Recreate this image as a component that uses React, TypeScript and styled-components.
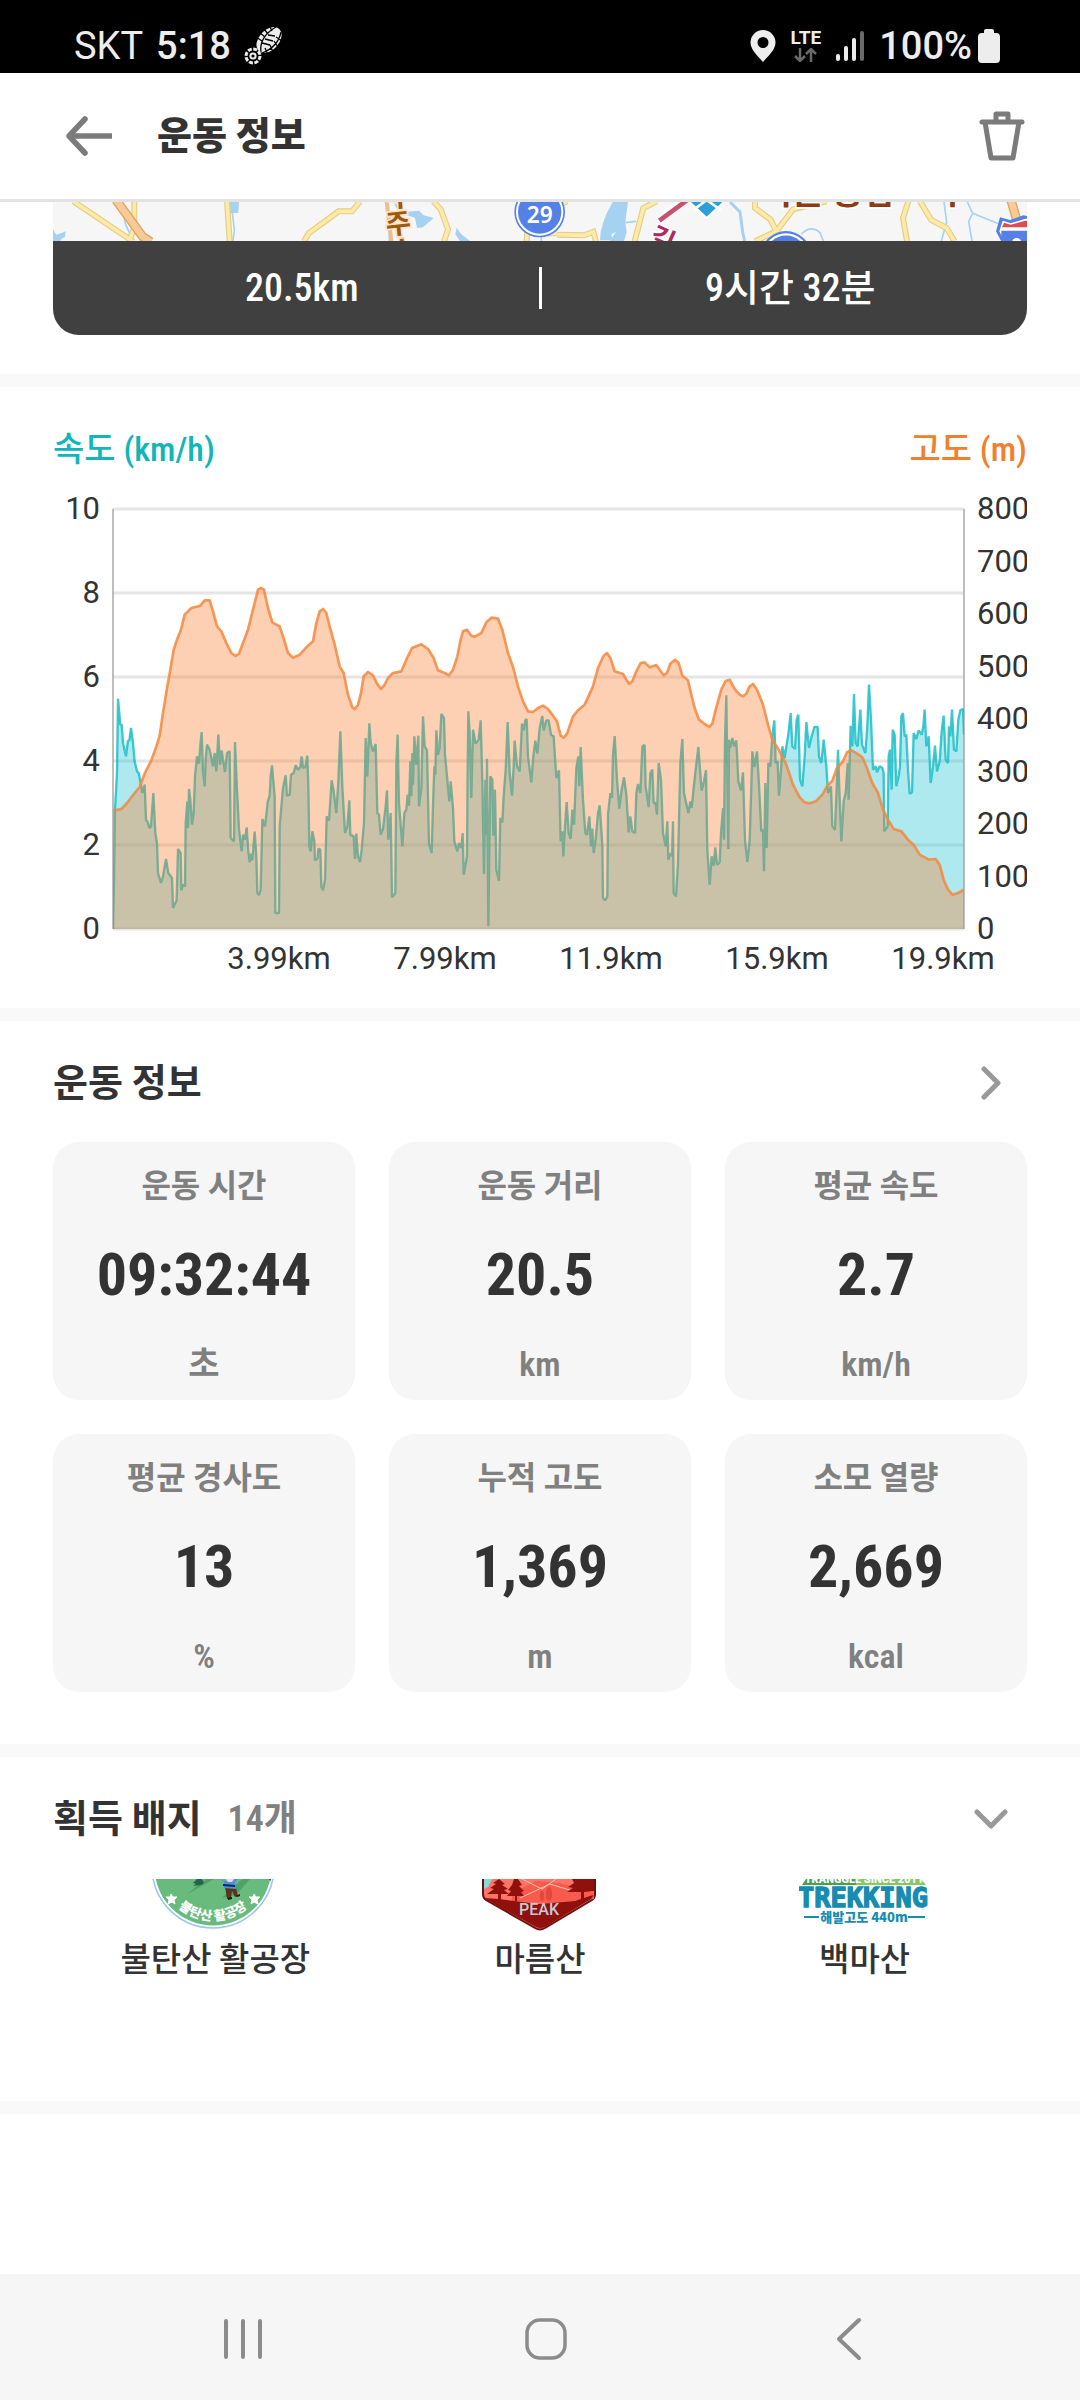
import React from "react";
import styled, { createGlobalStyle } from "styled-components";

const GlobalStyle = createGlobalStyle`
  *, *::before, *::after { box-sizing: border-box; }
  body {
    margin: 0;
    background: #ffffff;
    color: #333333;
    font-family: "Roboto Condensed", "Liberation Sans", "Noto Sans CJK KR", sans-serif;
  }
  h1, h2, p, dl, dt, dd, ul { margin: 0; padding: 0; }
  ul { list-style: none; }
  button {
    display: flex;
    align-items: center;
    justify-content: center;
    border: 0;
    padding: 0;
    background: none;
    cursor: pointer;
  }
  svg { display: block; }
`;

const Screen = styled.div`
  display: flex;
  flex-direction: column;
  min-height: 100vh;
`;

const StatusBar = styled.div`
  display: flex;
  align-items: center;
  justify-content: space-between;
  height: 73px;
  padding: 18px 80px 0 74px;
  background: #000000;
  color: #ededed;
  font-family: Roboto, sans-serif;
  font-size: 38px;
  line-height: 48px;
`;

const StatusGroup = styled.div<{ $gap: number }>`
  display: flex;
  align-items: center;
  gap: ${(p) => p.$gap}px;
`;

const StatusText = styled.span<{ $strong?: boolean }>`
  font-weight: ${(p) => (p.$strong ? 500 : 400)};
`;

const Network = styled.span`
  display: flex;
  flex-direction: column;
  align-items: center;
  gap: 2px;
  font-size: 19px;
  font-weight: 700;
  line-height: 16px;
`;

const Header = styled.header`
  display: flex;
  align-items: center;
  height: 129px;
  padding: 0 42px 0 53px;
  border-bottom: 3px solid #e2e2e2;
`;

const IconButton = styled.button`
  width: 72px;
  height: 72px;
  flex: none;
`;

const HeaderTitle = styled.h1`
  flex: 1;
  padding-left: 32px;
  font-size: 38px;
  font-weight: 900;
  line-height: 60px;
`;

const MapCard = styled.section`
  margin: 0 53px 39px;
  overflow: hidden;
  border-radius: 0 0 26px 26px;
`;

const MapStrip = styled.svg`
  width: 100%;
  height: 39px;
  background: #f6f6f6;
`;

const Summary = styled.div`
  display: grid;
  grid-template-columns: 1fr 3px 1fr;
  align-items: center;
  height: 94px;
  background: #404040;
  color: #ffffff;
  font-size: 38px;
  font-weight: 500;
  line-height: 60px;
  text-align: center;
`;

const SummaryValue = styled.span`
  padding-left: 12px;
`;

const SummaryRule = styled.span`
  height: 42px;
  background: #ffffff;
`;

const Separator = styled.hr`
  width: 100%;
  height: 13px;
  margin: 0;
  border: 0;
  background: #f9f9f9;
`;

const Section = styled.section<{ $bottom: number }>`
  padding: 32px 53px ${(p) => p.$bottom}px;
`;

const Legend = styled.div`
  display: flex;
  justify-content: space-between;
  height: 56px;
  font-size: 34px;
  font-weight: 500;
  line-height: 60px;
`;

const LegendItem = styled.span<{ $color: string }>`
  color: ${(p) => p.$color};
`;

const Chart = styled.svg`
  width: 100%;
  height: auto;
  font-family: Roboto, sans-serif;
  font-size: 31px;
`;

const SectionHead = styled.div`
  display: flex;
  align-items: center;
  height: 60px;
`;

const SectionTitle = styled.h2`
  font-size: 38px;
  font-weight: 700;
  line-height: 60px;
`;

const Count = styled.span`
  padding-left: 26px;
  color: #808080;
  font-size: 36px;
  font-weight: 600;
  line-height: 60px;
`;

const HeadButton = styled(IconButton)`
  margin-left: auto;
`;

const Stats = styled.dl`
  display: grid;
  grid-template-columns: repeat(3, 1fr);
  gap: 34px;
  padding-top: 29px;
`;

const Stat = styled.div`
  display: flex;
  flex-direction: column;
  align-items: center;
  justify-content: space-between;
  height: 258px;
  padding: 22px 8px 14px;
  border-radius: 26px;
  background: #f6f6f6;
`;

const StatLabel = styled.dt`
  color: #808080;
  font-size: 32px;
  font-weight: 700;
  line-height: 44px;
`;

const StatValue = styled.dd`
  font-size: 60px;
  font-weight: 700;
  line-height: 72px;
`;

const StatUnit = styled.dd`
  color: #808080;
  font-size: 34px;
  font-weight: 600;
  line-height: 44px;
`;

const Badges = styled.ul`
  display: grid;
  grid-template-columns: repeat(3, 1fr);
  height: 170px;
  margin-top: 30px;
  overflow: hidden;
`;

const Badge = styled.li`
  display: flex;
  flex-direction: column;
  align-items: center;
  gap: 5px;
  font-size: 33px;
  font-weight: 500;
  line-height: 48px;
`;

const NavBar = styled.nav`
  display: flex;
  align-items: center;
  justify-content: space-around;
  height: 126px;
  margin-top: auto;
  padding: 4px 80px 0 92px;
  background: #f6f6f6;
`;

/* Samples are [x, y] on a grid of three units per chart pixel. */
const elevation =
  "0,993 25,988 42,970 65,940 80,922 95,882 115,842 130,800 140,768 150,700 163,620 173,565 182,510 192,480 204,450 215,405 235,385 262,378 275,362 290,362 300,395 312,440 325,455 340,490 355,520 368,529 378,522 390,490 405,450 420,390 435,330 444,325 453,330 465,385 478,428 500,440 510,470 525,520 540,534 560,525 580,503 600,485 610,430 620,395 630,388 640,400 650,440 665,495 680,560 692,580 705,645 718,683 726,688 735,675 744,640 752,590 765,577 780,587 792,612 804,628 815,615 825,595 840,580 865,575 880,540 897,505 925,494 945,508 962,535 975,572 995,580 1008,587 1020,570 1033,530 1043,480 1050,455 1062,450 1075,468 1085,471 1105,460 1120,428 1135,414 1155,417 1168,450 1185,520 1200,562 1215,620 1230,665 1245,695 1260,697 1275,685 1290,678 1305,688 1320,708 1332,725 1343,768 1352,774 1362,762 1380,710 1395,692 1415,675 1440,620 1455,565 1472,528 1482,520 1492,535 1505,575 1530,583 1540,600 1548,612 1558,605 1570,575 1583,550 1595,548 1610,563 1630,556 1640,570 1652,587 1662,580 1672,552 1686,540 1697,550 1708,588 1725,602 1735,645 1745,685 1758,720 1775,733 1788,741 1798,732 1808,690 1825,630 1838,604 1850,600 1865,628 1880,645 1890,650 1900,642 1910,620 1920,613 1932,630 1950,675 1965,735 1978,780 2000,815 2020,855 2040,915 2060,953 2075,968 2090,971 2108,965 2128,945 2142,920 2158,903 2172,865 2190,845 2202,818 2216,812 2232,822 2248,833 2260,860 2278,910 2295,940 2310,990 2325,1020 2342,1048 2365,1055 2385,1080 2402,1095 2420,1125 2448,1140 2468,1138 2480,1155 2492,1200 2505,1230 2518,1245 2535,1240 2553,1230";

const speed =
  "0,1348 3,1200 6,990 12,880 15,657 22,735 26,735 30,790 39,830 45,783 49,783 54,745 60,790 65,845 72,875 77,880 82,905 88,940 95,915 99,1020 103,1025 110,1045 114,1040 121,940 127,1060 132,1090 135,1180 144,1210 150,1190 159,1138 166,1180 177,1195 180,1285 191,1262 195,1108 203,1120 205,1232 210,1215 216,1220 218,1030 223,965 225,1045 228,928 232,960 237,1035 242,1000 246,890 252,830 258,852 262,795 266,757 270,875 275,920 278,840 282,795 290,810 294,830 300,860 305,820 310,875 316,765 321,855 326,812 330,840 336,877 342,820 350,815 353,1075 363,1085 366,787 372,930 378,1050 386,1115 390,1065 396,1080 401,1043 406,1115 410,1147 414,1122 418,1142 425,1056 430,1130 433,1240 438,1246 443,1230 448,1018 456,1040 464,968 470,948 473,890 477,857 485,950 487,1300 498,1300 500,1040 510,925 518,887 522,948 530,945 534,885 542,880 548,857 555,870 562,862 566,830 570,865 577,862 583,828 586,920 589,1100 593,1115 598,1055 604,1085 606,1142 614,1135 616,1107 622,1110 625,1220 630,1232 636,1200 641,1010 648,1022 656,902 662,935 670,1000 676,905 682,755 688,920 696,1060 703,1040 709,962 712,1065 722,1070 726,1138 730,1062 735,1130 741,1147 746,1110 753,1030 758,775 763,890 769,731 773,790 780,815 788,793 793,1000 798,1005 803,1065 810,1048 818,980 822,932 826,1080 833,1000 837,1253 847,1240 850,850 854,765 858,970 868,1100 874,1000 880,990 884,945 888,978 892,845 895,950 898,820 900,915 904,770 910,855 916,768 918,980 925,925 930,710 935,800 942,812 948,1090 956,1120 960,980 964,860 967,885 970,752 975,825 980,805 985,703 993,715 996,825 1003,900 1009,965 1013,905 1020,985 1024,1085 1033,1115 1038,1090 1045,1105 1049,1060 1052,1185 1062,1130 1064,860 1066,695 1070,760 1075,955 1080,750 1088,792 1097,780 1103,722 1108,900 1113,1183 1117,900 1120,1065 1122,837 1126,1340 1132,890 1138,900 1141,1068 1146,930 1150,1170 1158,1203 1162,1015 1168,1028 1172,950 1178,870 1184,727 1190,880 1197,948 1202,860 1205,783 1212,860 1220,875 1227,732 1232,752 1237,722 1241,718 1245,830 1255,908 1261,830 1267,783 1273,822 1280,745 1288,709 1292,752 1300,722 1307,722 1314,765 1322,770 1330,895 1338,872 1343,1085 1348,1055 1351,1130 1356,1040 1361,967 1367,1060 1373,1078 1378,990 1383,1035 1390,865 1396,830 1399,920 1403,802 1410,960 1417,1060 1422,1065 1429,1010 1434,1100 1438,1047 1442,1120 1448,1080 1455,1000 1460,977 1468,1095 1470,1255 1477,1262 1483,1250 1485,1005 1492,940 1497,955 1500,825 1505,769 1512,900 1519,987 1526,930 1533,893 1540,945 1547,1058 1552,1010 1558,1055 1566,1060 1570,940 1575,913 1582,940 1588,800 1595,796 1598,920 1607,982 1612,880 1618,870 1622,970 1628,970 1632,1005 1637,850 1644,900 1650,1060 1658,1100 1663,1025 1666,1140 1672,1120 1677,1130 1680,1025 1682,1240 1689,1250 1695,1150 1702,850 1708,778 1713,940 1726,1000 1732,965 1736,985 1742,925 1748,870 1756,802 1761,870 1766,933 1773,905 1779,872 1783,1110 1790,1215 1796,1130 1802,1158 1807,1103 1812,1155 1820,1148 1824,1060 1830,985 1833,1080 1836,780 1840,647 1846,1108 1848,780 1852,805 1858,775 1864,800 1870,782 1876,905 1884,932 1890,878 1896,1080 1903,1147 1910,1080 1915,920 1918,815 1924,862 1932,815 1938,915 1945,1055 1950,1050 1953,1175 1957,910 1961,1105 1966,850 1972,860 1978,770 1984,722 1988,850 1994,845 1998,948 2004,870 2008,800 2015,835 2020,800 2026,765 2033,700 2038,800 2046,808 2051,720 2056,705 2061,900 2068,920 2075,830 2080,727 2088,805 2096,770 2104,742 2114,742 2118,830 2125,850 2132,780 2140,860 2145,940 2154,920 2158,1040 2166,1050 2172,900 2175,810 2179,930 2185,1085 2192,965 2198,940 2204,850 2207,960 2213,738 2218,800 2223,643 2228,790 2234,800 2242,690 2247,795 2257,820 2263,740 2268,615 2274,720 2280,870 2288,860 2292,878 2300,860 2308,865 2312,880 2314,1055 2324,1040 2327,830 2331,810 2336,930 2339,750 2345,765 2350,920 2357,890 2361,860 2365,710 2370,700 2375,770 2380,765 2385,870 2390,942 2397,938 2402,760 2410,778 2417,752 2426,765 2431,740 2435,690 2440,800 2447,770 2453,910 2460,860 2466,798 2472,875 2480,845 2486,755 2492,708 2498,840 2505,850 2508,740 2512,770 2517,690 2523,810 2530,815 2536,720 2542,692 2550,688 2553,765";

const speedTicks = [10, 8, 6, 4, 2, 0];
const elevationTicks = [800, 700, 600, 500, 400, 300, 200, 100, 0];
const distanceTicks = ["3.99km", "7.99km", "11.9km", "15.9km", "19.9km"];

const PLOT = { left: 60, right: 911, top: 34, bottom: 454 };
const plotHeight = PLOT.bottom - PLOT.top;

function WorkoutChart() {
  return (
    <Chart viewBox="0 0 974 520" role="img" aria-label="속도 및 고도 그래프">
      <g stroke="#e5e5e5" strokeWidth="3">
        {speedTicks.map((t) => {
          const y = PLOT.bottom - (t / 10) * plotHeight;
          return <line key={t} x1={PLOT.left} x2={PLOT.right} y1={y} y2={y} />;
        })}
      </g>
      <g stroke="#a9a9a9" strokeWidth="1.5">
        <line x1={PLOT.left} x2={PLOT.left} y1={PLOT.top} y2={PLOT.bottom} />
        <line x1={PLOT.right} x2={PLOT.right} y1={PLOT.top} y2={PLOT.bottom} />
      </g>
      <svg
        x={PLOT.left}
        y={PLOT.top}
        width={PLOT.right - PLOT.left}
        height={plotHeight}
        viewBox="0 88 2553 1260"
        preserveAspectRatio="none"
      >
        <polygon points={`0,1348 ${speed} 2553,1348`} fill="#18c0d1" fillOpacity="0.35" />
        <polyline points={speed} fill="none" stroke="#10bcc6" strokeOpacity="0.8" strokeWidth="7" strokeLinejoin="bevel" />
        <polygon points={`0,1348 ${elevation} 2553,1348`} fill="#fc7926" fillOpacity="0.35" />
        <polyline points={elevation} fill="none" stroke="#f4873d" strokeOpacity="0.85" strokeWidth="8" strokeLinejoin="round" />
      </svg>
      <g fill="#333333">
        {speedTicks.map((t) => (
          <text key={t} x={PLOT.left - 13} y={PLOT.bottom - (t / 10) * plotHeight + 10} textAnchor="end">
            {t}
          </text>
        ))}
        {elevationTicks.map((t) => (
          <text key={t} x={PLOT.right + 13} y={PLOT.bottom - (t / 800) * plotHeight + 10}>
            {t}
          </text>
        ))}
        {distanceTicks.map((t, i) => (
          <text key={t} x={226 + i * 166} y={494} textAnchor="middle">
            {t}
          </text>
        ))}
      </g>
    </Chart>
  );
}

function Road({ d, wide }: { d: string; wide?: boolean }) {
  return (
    <g fill="none">
      <path d={d} stroke={wide ? "#e0a263" : "#e5cd85"} strokeWidth={wide ? 28 : 18} />
      <path d={d} stroke={wide ? "#f8cb94" : "#fdeaa9"} strokeWidth={wide ? 20 : 11} />
    </g>
  );
}

function MapView() {
  return (
    <MapStrip viewBox="39 36 2922 117" preserveAspectRatio="xMidYMid slice" role="img" aria-label="운동 경로 지도">
      <g fill="#a5d2f1">
        <path d="M39 118l10 16 14-4 14-6-2 16-10 6-6 10H39z" />
        <path d="M568 36h29l-2 33h-25z" />
        <path d="M1062 36l30 30 45-4 14 14 30 8-32 28-18 2-6-30-40-14-18-20z" />
        <path d="M1250 113l14 20 26 20h-30l-14-20z" />
        <path d="M1718 36h46l-8 60 4 30-8 27h-42l18-28-14 8 4 18h-38q0-50 38-115z" />
      </g>
      <g fill="none" stroke="#a5d2f1" strokeWidth="5">
        <path d="M253 86l4 18 14 30M577 69l6 50-4 34M1048 110v43M1504 130v23M1756 98l32-4" />
        <path d="M2070 36l30 30 8 60 6 27" strokeWidth="9" />
        <path d="M2284 132q30-28 56-4l10 25M2712 36l8 60-16 57M2782 36l16 34-12 24 10 59M2798 70l50 20 50 20" />
      </g>
      <Road d="M100 34L280 155M283 34v80l-16 39M561 34l8 119M960 34l-24 30h-40l-90 66-14 24M1180 34l22 24 22 60-12 36M1462 120l-2 34M1520 130h30" />
      <Road d="M228 30l80 110 24 16" wide />
      <Road d="M1552 134l80 2 28-10 8 28M1850 34l-40 20-26 100M1560 46l20-12M2145 34v20l46 34 18 36-64 30M2209 124l50-66 100-24M2605 34l-16 50 12 70M2640 34l34 56 46 24 24 40" />
      <Road d="M2910 20l26 90" wide />
      <path d="M1854 92l88-66" stroke="#ffffff" strokeWidth="26" />
      <path d="M1858 92l84-62" stroke="#c95170" strokeWidth="14" />
      <path d="M1940 28h120l-60 56z" fill="#2c9fd9" stroke="#ffffff" strokeWidth="6" />
      <path d="M1960 60l40-30 42 30" stroke="#ffffff" strokeWidth="8" fill="none" />
      <path d="M1040 34l14 120" stroke="#f3bb8a" strokeWidth="12" />
      <g stroke="#ffffff" strokeWidth="10" paintOrder="stroke" fontWeight="700">
        <g fill="#9b5a10" stroke="#fbe3c8" fontSize="82">
          <text x="1044" y="52" transform="rotate(-4 1044 52)">수</text>
          <text x="1040" y="134" transform="rotate(-6 1040 134)">주</text>
          <text x="1052" y="216" transform="rotate(-4 1052 216)">속</text>
        </g>
        <text x="1822" y="160" fill="#b02a5b" fontSize="80" transform="rotate(24 1822 160)">길</text>
        <text x="2160" y="42" fill="#8f3a10" fontSize="104">서울 종합</text>
        <text x="2660" y="42" fill="#8f3a10" fontSize="104">시</text>
      </g>
      <g>
        <circle cx="1499" cy="66" r="76" fill="#5580e5" />
        <circle cx="1499" cy="66" r="68" fill="none" stroke="#ffffff" strokeWidth="6" />
        <text x="1499" y="98" fill="#ffffff" fontFamily="Noto Sans" fontSize="68" fontWeight="600" textAnchor="middle">29</text>
        <circle cx="2238" cy="199" r="76" fill="#5580e5" />
        <circle cx="2238" cy="199" r="66" fill="none" stroke="#ffffff" strokeWidth="7" />
      </g>
      <path d="M2880 82l30 8 40-14 30 6v80h-92l-20-38z" fill="#5580e5" />
      <path d="M2888 92l24 8 44-14 24 4v70h-84l-18-36z" fill="#ffffff" />
      <path d="M2892 98l20 6 44-12h20v20h-90z" fill="#e34b50" />
      <path d="M2884 122h90v40h-80l-10-24z" fill="#5580e5" />
      <ellipse cx="2930" cy="158" rx="14" ry="14" fill="#ffffff" />
    </MapStrip>
  );
}

function ParaglidingBadge() {
  return (
    <svg width="130" height="52" viewBox="150 1879 130 52" role="img" aria-label="불탄산 활공장 배지">
      <circle cx="213" cy="1867" r="61" fill="#ffffff" stroke="#9cc5f0" strokeWidth="1.5" />
      <circle cx="213" cy="1867" r="58.5" fill="#68bb7d" />
      <path d="M186 1895l20-16h8zM222 1898l20-19h8l-14 16z" fill="#4fa267" />
      <path d="M197 1879l-4 4 3 1-3 2 8-1 3-2-2-4zM268 1879l3 2v-2z" fill="#23644f" />
      <path d="M225 1887l11 1 2 8-3 1-3-6-1 7-4 1z" fill="#5b3419" />
      <path d="M228 1898l4-1v2l-4 1zM236 1896l4-2v2l-3 1z" fill="#111a28" />
      <path d="M220 1879l4 3v6l12 1-1-7 3-3-3-1-4 3h-6z" fill="#4a8fea" />
      <path d="M226 1879h8l-2 3h-4z" fill="#f7d9cd" />
      <path d="M223 1884l12 1v2l-12-1z" fill="#13274b" />
      <g fill="#ffffff" stroke="#ffffff" strokeWidth="1" strokeLinejoin="round">
        <path d="M171 1894l2 3 4 0-3 3 1 4-3-2-4 2 1-4-3-3h4z" />
        <path d="M254 1894l2 3 4 0-3 3 1 4-4-2-3 2 1-4-3-3h4z" />
      </g>
      <path id="glider-text" d="M166 1892A53 53 0 0 0 260 1892" fill="none" />
      <text fill="#ffffff" fontSize="13" fontWeight="900" textAnchor="middle">
        <textPath href="#glider-text" startOffset="50%">불탄산 활공장</textPath>
      </text>
    </svg>
  );
}

function PeakBadge() {
  return (
    <svg width="118" height="52" viewBox="481 1879 118 52" role="img" aria-label="마름산 배지">
      <path d="M483 1870h112v24q0 4-3 6l-47 28q-5 3-10 0l-49-28q-3-2-3-6z" fill="#ff7565" stroke="#6b0f10" strokeWidth="2" />
      <path d="M484 1879h8l-4 8-4 2z" fill="#85dbd8" />
      <path d="M512 1893l24-12 24 2 34 10v6l-46 4-36-2z" fill="#f65b4d" />
      <path d="M522 1879l20 10 14-10M520 1898l30-14 26 8" stroke="#ffc4b4" strokeWidth="1" fill="none" />
      <path d="M485 1898l14 1 40 5 36-3 18-6v0q0 2-2 4l-46 28q-5 2-9 0l-49-27z" fill="#8f100c" />
      <g fill="#8f100c">
        <path d="M499 1879l6 5-3 1 6 4-4 1 5 4h-8v6h-3v-6h-11l7-5-4-1 6-4-3-1z" />
        <path d="M514 1879h4l4 6-3 1 5 5-3 1 3 4h-7v5h-2v-5h-8l4-5-3-1 4-5z" />
        <path d="M572 1879h22v12l-10 1v8h-3v-8h-14l6-4-5-1 6-4z" />
      </g>
      <g fill="#e2463c">
        <ellipse cx="549" cy="1894" rx="3" ry="7" />
        <ellipse cx="542" cy="1896" rx="2" ry="5" />
      </g>
      <text x="539" y="1915" fill="#c3cbd6" fontFamily="Roboto" fontSize="16" textAnchor="middle">PEAK</text>
    </svg>
  );
}

function TrekkingBadge() {
  return (
    <svg width="132" height="52" viewBox="799 1879 132 52" role="img" aria-label="백마산 배지">
      <path d="M806 1879h50v6h-54z" fill="#4b9f52" />
      <path d="M856 1879h65l5 6h-70z" fill="#86c766" />
      <g fontWeight="700" textAnchor="middle">
        <text x="864" y="1883" fill="#ffffff" fontFamily="Roboto" fontSize="11" fontWeight="900">TRANGGLE SINCE 2011</text>
        <text x="863" y="1907" fill="#168db0" stroke="#168db0" strokeWidth="1.4" fontFamily="DejaVu Sans Mono" fontSize="27">TREKKING</text>
        <text x="864" y="1922" fill="#168db0" fontFamily="Noto Sans CJK KR" fontSize="13" fontWeight="900">해발고도 440m</text>
      </g>
      <path d="M804 1917h15M908 1917h17" stroke="#168db0" strokeWidth="2" />
    </svg>
  );
}

const stats = [
  { label: "운동 시간", value: "09:32:44", unit: "초" },
  { label: "운동 거리", value: "20.5", unit: "km" },
  { label: "평균 속도", value: "2.7", unit: "km/h" },
  { label: "평균 경사도", value: "13", unit: "%" },
  { label: "누적 고도", value: "1,369", unit: "m" },
  { label: "소모 열량", value: "2,669", unit: "kcal" },
];

const badges = [
  { name: "불탄산 활공장", art: <ParaglidingBadge /> },
  { name: "마름산", art: <PeakBadge /> },
  { name: "백마산", art: <TrekkingBadge /> },
];

export default function App() {
  return (
    <>
      <GlobalStyle />
      <Screen>
        <StatusBar>
          <StatusGroup $gap={13}>
            <StatusText>SKT</StatusText>
            <StatusText $strong>5:18</StatusText>
            <svg width="40" height="38" viewBox="0 0 40 38">
              <ellipse cx="25" cy="13" rx="15" ry="10" fill="#ededed" transform="rotate(-47 25 13)" />
              <g stroke="#000000" strokeWidth="1.3" fill="none">
                <path d="M17 25Q15 10 32 0M18 26Q34 20 37 5M12 10l6 4M15 5l6 5M20 2l4 5M26 0l2 4M24 28l-3-7M29 25l-3-7M34 20l-4-6M38 14l-6-4M18 16l8 2M21 12l8 2M24 8l7 1" />
              </g>
              <circle cx="9" cy="29" r="7" fill="none" stroke="#ededed" strokeWidth="3" strokeDasharray="4 1.5" />
              <circle cx="9" cy="29" r="2.6" fill="none" stroke="#ededed" strokeWidth="2" />
            </svg>
          </StatusGroup>
          <StatusGroup $gap={15}>
            <svg width="26" height="32" viewBox="0 0 26 32">
              <path fillRule="evenodd" d="M13 0a12.5 12.5 0 0 1 12.5 12.5C25.500 20 18 26 13 32 8 26 .5 20 .5 12.500A12.500 12.500 0 0 1 13 0zm0 7a5.500 5.500 0 1 0 0 11 5.500 5.500 0 0 0 0-11z" fill="#ededed" />
            </svg>
            <Network>
              LTE
              <svg width="24" height="14" viewBox="0 0 24 14" fill="none" stroke="#6a6a6a" strokeWidth="2.5">
                <path d="M6 0v12M1 8l5 5 5-5M17 14V2M12 6l5-5 5 5" />
              </svg>
            </Network>
            <svg width="28" height="30" viewBox="0 0 28 30" strokeWidth="4" strokeLinecap="round" stroke="#ededed">
              <path d="M2 25v3M10 17v11M18 9v19" />
              <path d="M26 2v26" stroke="#6a6a6a" />
            </svg>
            <StatusGroup $gap={6}>
              <StatusText $strong>100%</StatusText>
              <svg width="22" height="34" viewBox="0 0 22 34" fill="#ededed">
                <rect x="6" y="0" width="10" height="8" rx="2" />
                <rect x="0" y="4" width="22" height="30" rx="4" />
              </svg>
            </StatusGroup>
          </StatusGroup>
        </StatusBar>

        <Header>
          <IconButton type="button" aria-label="뒤로">
            <svg width="48" height="42" viewBox="0 0 48 42" fill="none" stroke="#7b7b7b" strokeWidth="5.500" strokeLinejoin="round">
              <path d="M4 21h43" />
              <path d="M20 4L4 21l16 17" strokeLinecap="round" />
            </svg>
          </IconButton>
          <HeaderTitle>운동 정보</HeaderTitle>
          <IconButton type="button" aria-label="삭제">
            <svg width="46" height="50" viewBox="0 0 46 50" fill="none" stroke="#7b7b7b" strokeWidth="5" strokeLinejoin="round" strokeLinecap="round">
              <path d="M3 11h40M17 11V3h12v8M6 11l6 36h22l6-36" />
            </svg>
          </IconButton>
        </Header>

        <main>
          <MapCard>
            <MapView />
            <Summary>
              <SummaryValue>20.5km</SummaryValue>
              <SummaryRule />
              <SummaryValue>9시간 32분</SummaryValue>
            </Summary>
          </MapCard>
          <Separator />

          <Section $bottom={13}>
            <Legend>
              <LegendItem $color="#12b5b8">속도 (km/h)</LegendItem>
              <LegendItem $color="#f0802f">고도 (m)</LegendItem>
            </Legend>
            <WorkoutChart />
          </Section>
          <Separator />

          <Section $bottom={52}>
            <SectionHead>
              <SectionTitle>운동 정보</SectionTitle>
              <HeadButton type="button" aria-label="운동 정보 더보기">
                <svg width="20" height="34" viewBox="0 0 20 34" fill="none" stroke="#999999" strokeWidth="5" strokeLinecap="round" strokeLinejoin="round">
                  <path d="M3 3l14 14L3 31" />
                </svg>
              </HeadButton>
            </SectionHead>
            <Stats>
              {stats.map((s) => (
                <Stat key={s.label}>
                  <StatLabel>{s.label}</StatLabel>
                  <StatValue>{s.value}</StatValue>
                  <StatUnit>{s.unit}</StatUnit>
                </Stat>
              ))}
            </Stats>
          </Section>
          <Separator />

          <Section $bottom={52}>
            <SectionHead>
              <SectionTitle>획득 배지</SectionTitle>
              <Count>14개</Count>
              <HeadButton type="button" aria-label="배지 펼치기">
                <svg width="34" height="20" viewBox="0 0 34 20" fill="none" stroke="#999999" strokeWidth="5" strokeLinecap="round" strokeLinejoin="round">
                  <path d="M3 3l14 14L31 3" />
                </svg>
              </HeadButton>
            </SectionHead>
            <Badges>
              {badges.map((b) => (
                <Badge key={b.name}>
                  {b.art}
                  <p>{b.name}</p>
                </Badge>
              ))}
            </Badges>
          </Section>
          <Separator />
        </main>

        <NavBar>
          <IconButton type="button" aria-label="최근 앱">
            <svg width="40" height="42" viewBox="0 0 40 42" stroke="#8c8c8c" strokeWidth="4" strokeLinecap="round">
              <path d="M3 3v36M20 3v36M37 3v36" />
            </svg>
          </IconButton>
          <IconButton type="button" aria-label="홈">
            <svg width="42" height="42" viewBox="0 0 42 42" fill="none" stroke="#8c8c8c" strokeWidth="3.500">
              <rect x="2" y="2" width="38" height="38" rx="13" />
            </svg>
          </IconButton>
          <IconButton type="button" aria-label="이전">
            <svg width="26" height="44" viewBox="0 0 26 44" fill="none" stroke="#8c8c8c" strokeWidth="4" strokeLinecap="round" strokeLinejoin="round">
              <path d="M23 3L3 22l20 19" />
            </svg>
          </IconButton>
        </NavBar>
      </Screen>
    </>
  );
}
